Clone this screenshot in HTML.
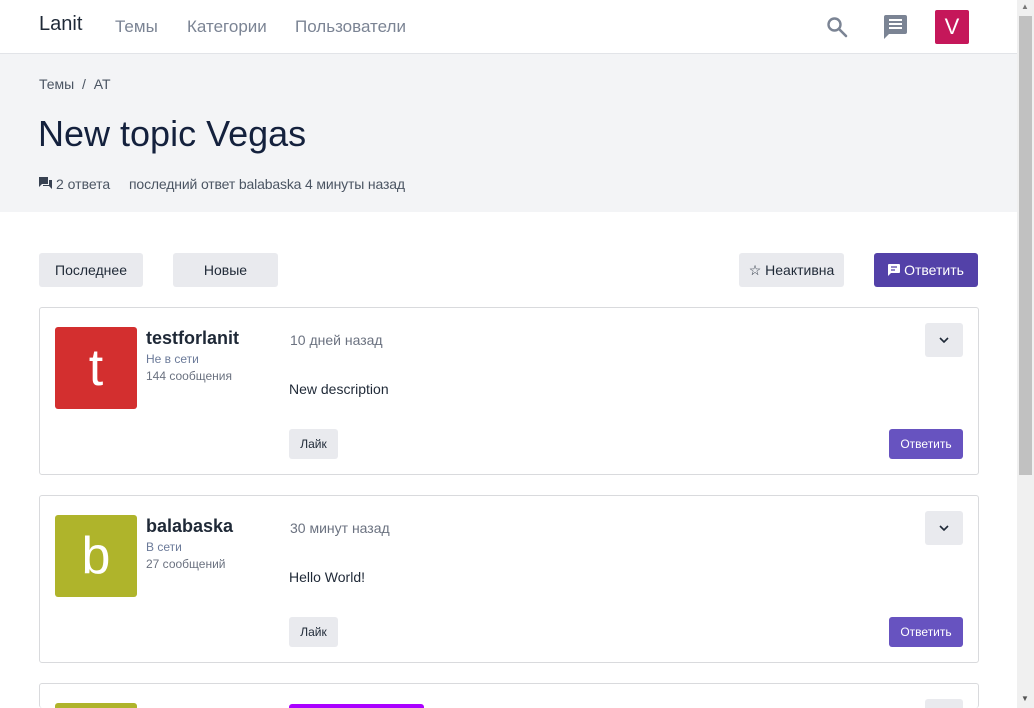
<!DOCTYPE html><html style="overflow:hidden;height:708px"><head><meta charset="utf-8"><style>
*{box-sizing:border-box;margin:0;padding:0}
body{width:1034px;height:708px;overflow:hidden;font-family:"Liberation Sans",sans-serif;background:#fff;position:relative;color:#111827}
.a{position:absolute}
.nav{top:0;left:0;width:1017px;height:54px;border-bottom:1px solid #e2e4e8;box-shadow:0 1px 2px rgba(0,0,0,.05);background:#fff}
.band{top:54px;left:0;width:1017px;height:158px;background:#f3f4f6}
.btn{position:absolute;background:#e9eaee;border-radius:3px;font-size:14px;color:#1f2937;display:flex;align-items:center;justify-content:center}
.pbtn{position:absolute;background:#6753c0;border-radius:3px;color:#fff;font-size:12px;display:flex;align-items:center;justify-content:center}
.card{position:absolute;left:39px;width:940px;height:168px;border:1px solid #d9dadd;border-radius:3px;background:#fff}
.sb{top:0;left:1017px;width:17px;height:708px;background:#f0f0f0}
</style></head><body>
<div class="a nav"></div>
<div class="a" style="left:39px;top:13px;font-size:20px;color:#1f2937">Lanit</div>
<div class="a" style="left:115px;top:17px;font-size:17px;color:#7b8494">Темы</div>
<div class="a" style="left:187px;top:17px;font-size:17px;color:#7b8494">Категории</div>
<div class="a" style="left:295px;top:17px;font-size:17px;color:#7b8494">Пользователи</div>
<svg class="a" style="left:826px;top:16px" width="22" height="22" viewBox="0 0 22 22"><circle cx="8.5" cy="8.5" r="6" fill="none" stroke="#7b8494" stroke-width="2.4"/><path d="M13 13l7 7" stroke="#7b8494" stroke-width="2.6" stroke-linecap="round"/></svg>
<svg class="a" style="left:883px;top:15px" width="26" height="25" viewBox="0 0 26 25"><path d="M1 2a2 2 0 012-2h19a2 2 0 012 2v15a2 2 0 01-2 2H6l-5 5z" fill="#7b8494"/><path d="M6 5h13M6 9h13M6 13h13" stroke="#fff" stroke-width="2"/></svg>
<div class="a" style="left:935px;top:10px;width:34px;height:34px;background:#c5175a;border-radius:2px;color:#fff;font-size:22px;text-align:center;line-height:34px">V</div>
<div class="a band"></div>
<div class="a" style="left:39px;top:76px;font-size:14px;color:#4b5563">Темы &nbsp;/&nbsp; AT</div>
<div class="a" style="left:38px;top:113px;font-size:36px;color:#14213d">New topic Vegas</div>
<svg class="a" style="left:39px;top:177px" width="13" height="12" viewBox="0 0 13 12"><path d="M0 0h9v7H3L0 10z" fill="#374151"/><path d="M10 3h3v9l-3-3H4V8h6z" fill="#374151"/></svg>
<div class="a" style="left:56px;top:176px;font-size:14px;color:#4b5563">2 ответа</div>
<div class="a" style="left:129px;top:176px;font-size:14px;color:#4b5563;letter-spacing:-0.15px">последний ответ balabaska 4 минуты назад</div>
<div class="btn" style="left:39px;top:253px;width:104px;height:34px">Последнее</div>
<div class="btn" style="left:173px;top:253px;width:105px;height:34px">Новые</div>
<div class="btn" style="left:739px;top:253px;width:105px;height:34px">☆ Неактивна</div>
<div class="pbtn" style="left:874px;top:253px;width:104px;height:34px;background:#5341a8;font-size:14px"><svg width="12" height="12" viewBox="0 0 12 12" style="margin-right:4px"><path d="M0 1a1 1 0 011-1h10a1 1 0 011 1v7a1 1 0 01-1 1H3l-3 3z" fill="#fff"/><path d="M3 3h6M3 6h4" stroke="#5341a8" stroke-width="1.3"/></svg>Ответить</div>

<div class="card" style="top:307px"></div>
<div class="a" style="left:55px;top:327px;width:82px;height:82px;background:#d32f2f;border-radius:3px;color:#fff;font-size:52px;text-align:center;line-height:82px">t</div>
<div class="a" style="left:146px;top:328px;font-size:18px;font-weight:bold;color:#1f2937">testforlanit</div>
<div class="a" style="left:146px;top:352px;font-size:12px;color:#6b7a99">Не в сети</div>
<div class="a" style="left:146px;top:369px;font-size:12px;color:#6b7280">144 сообщения</div>
<div class="a" style="left:290px;top:332px;font-size:14px;color:#6b7280">10 дней назад</div>
<div class="btn" style="left:925px;top:323px;width:38px;height:34px"><svg width="10" height="6" viewBox="0 0 10 6"><path d="M1 1l4 4 4-4" fill="none" stroke="#1f2937" stroke-width="1.6"/></svg></div>
<div class="a" style="left:289px;top:381px;font-size:14px;color:#1f2937">New description</div>
<div class="btn" style="left:289px;top:429px;width:49px;height:30px;font-size:12px">Лайк</div>
<div class="pbtn" style="left:889px;top:429px;width:74px;height:30px">Ответить</div>

<div class="card" style="top:495px"></div>
<div class="a" style="left:55px;top:515px;width:82px;height:82px;background:#afb42b;border-radius:3px;color:#fff;font-size:52px;text-align:center;line-height:82px">b</div>
<div class="a" style="left:146px;top:516px;font-size:18px;font-weight:bold;color:#1f2937">balabaska</div>
<div class="a" style="left:146px;top:540px;font-size:12px;color:#6b7a99">В сети</div>
<div class="a" style="left:146px;top:557px;font-size:12px;color:#6b7280">27 сообщений</div>
<div class="a" style="left:290px;top:520px;font-size:14px;color:#6b7280">30 минут назад</div>
<div class="btn" style="left:925px;top:511px;width:38px;height:34px"><svg width="10" height="6" viewBox="0 0 10 6"><path d="M1 1l4 4 4-4" fill="none" stroke="#1f2937" stroke-width="1.6"/></svg></div>
<div class="a" style="left:289px;top:569px;font-size:14px;color:#1f2937">Hello World!</div>
<div class="btn" style="left:289px;top:617px;width:49px;height:30px;font-size:12px">Лайк</div>
<div class="pbtn" style="left:889px;top:617px;width:74px;height:30px">Ответить</div>

<div class="card" style="top:683px;height:25px;border-bottom:none"></div>
<div class="a" style="left:55px;top:703px;width:82px;height:5px;background:#afb42b;border-radius:3px 3px 0 0"></div>
<div class="a" style="left:289px;top:704px;width:135px;height:4px;background:#aa00ff;border-radius:3px 3px 0 0"></div>
<div class="a" style="left:925px;top:699px;width:38px;height:9px;background:#e9eaee;border-radius:3px 3px 0 0"></div>

<div class="a sb"></div>
<div class="a" style="left:1019px;top:16px;width:13px;height:459px;background:#c1c1c1"></div>
<div class="a" style="left:1021px;top:2px;font-size:8px;color:#777">▲</div>
<div class="a" style="left:1021px;top:694px;font-size:8px;color:#555">▼</div>
</body></html>
